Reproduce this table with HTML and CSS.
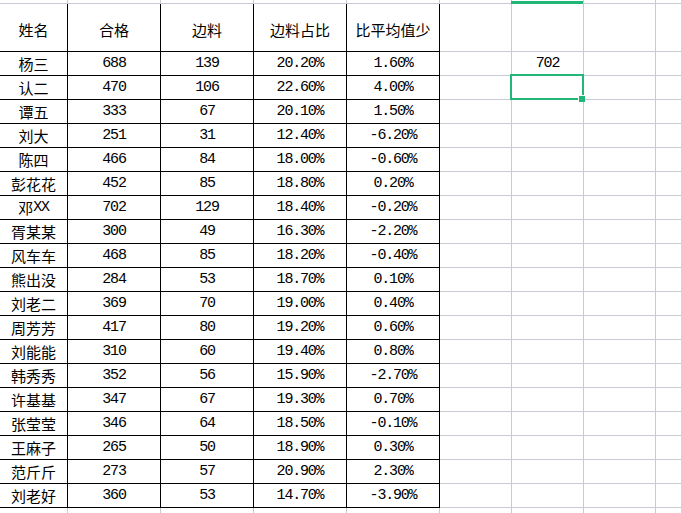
FILE: index.html
```html
<!DOCTYPE html>
<html lang="zh-CN">
<head>
<meta charset="utf-8">
<title>表格</title>
<link rel="stylesheet" href="styles.css">
</head>
<body>
<div class="sheet">
  <div class="r top"><div></div><div></div><div></div><div></div><div></div><div></div><div class="csel"></div><div></div><div></div></div>
  <div class="r t h"><div>姓名</div><div>合格</div><div>边料</div><div>边料占比</div><div>比平均值少</div><div></div><div></div><div></div><div></div></div>
  <div class="r t"><div>杨三</div><div>688</div><div>139</div><div>20.20%</div><div>1.60%</div><div></div><div>702</div><div></div><div></div></div>
  <div class="r t"><div>认二</div><div>470</div><div>106</div><div>22.60%</div><div>4.00%</div><div></div><div class="sel"></div><div></div><div></div></div>
  <div class="r t"><div>谭五</div><div>333</div><div>67</div><div>20.10%</div><div>1.50%</div><div></div><div></div><div></div><div></div></div>
  <div class="r t"><div>刘大</div><div>251</div><div>31</div><div>12.40%</div><div>-6.20%</div><div></div><div></div><div></div><div></div></div>
  <div class="r t"><div>陈四</div><div>466</div><div>84</div><div>18.00%</div><div>-0.60%</div><div></div><div></div><div></div><div></div></div>
  <div class="r t"><div>彭花花</div><div>452</div><div>85</div><div>18.80%</div><div>0.20%</div><div></div><div></div><div></div><div></div></div>
  <div class="r t"><div>邓<span class="lat">XX</span></div><div>702</div><div>129</div><div>18.40%</div><div>-0.20%</div><div></div><div></div><div></div><div></div></div>
  <div class="r t"><div>胥某某</div><div>300</div><div>49</div><div>16.30%</div><div>-2.20%</div><div></div><div></div><div></div><div></div></div>
  <div class="r t"><div>风车车</div><div>468</div><div>85</div><div>18.20%</div><div>-0.40%</div><div></div><div></div><div></div><div></div></div>
  <div class="r t"><div>熊出没</div><div>284</div><div>53</div><div>18.70%</div><div>0.10%</div><div></div><div></div><div></div><div></div></div>
  <div class="r t"><div>刘老二</div><div>369</div><div>70</div><div>19.00%</div><div>0.40%</div><div></div><div></div><div></div><div></div></div>
  <div class="r t"><div>周芳芳</div><div>417</div><div>80</div><div>19.20%</div><div>0.60%</div><div></div><div></div><div></div><div></div></div>
  <div class="r t"><div>刘能能</div><div>310</div><div>60</div><div>19.40%</div><div>0.80%</div><div></div><div></div><div></div><div></div></div>
  <div class="r t"><div>韩秀秀</div><div>352</div><div>56</div><div>15.90%</div><div>-2.70%</div><div></div><div></div><div></div><div></div></div>
  <div class="r t"><div>许基基</div><div>347</div><div>67</div><div>19.30%</div><div>0.70%</div><div></div><div></div><div></div><div></div></div>
  <div class="r t"><div>张莹莹</div><div>346</div><div>64</div><div>18.50%</div><div>-0.10%</div><div></div><div></div><div></div><div></div></div>
  <div class="r t"><div>王麻子</div><div>265</div><div>50</div><div>18.90%</div><div>0.30%</div><div></div><div></div><div></div><div></div></div>
  <div class="r t"><div>范斤斤</div><div>273</div><div>57</div><div>20.90%</div><div>2.30%</div><div></div><div></div><div></div><div></div></div>
  <div class="r t"><div>刘老好</div><div>360</div><div>53</div><div>14.70%</div><div>-3.90%</div><div></div><div></div><div></div><div></div></div>
  <div class="r"><div></div><div></div><div></div><div></div><div></div><div></div><div></div><div></div><div></div></div>
</div>
</body>
</html>
```

FILE: styles.css
```css
html, body {
  margin: 0;
  padding: 0;
  background: #ffffff;
  overflow: hidden;
}

.sheet {
  width: 681px;
  height: 513px;
  overflow: hidden;
  display: grid;
  grid-template-columns: 68px 93px 93px 93px 93px 72px 72px 72px minmax(0, 1fr);
  grid-template-rows: 4px 48px repeat(19, 24px) 6px;
  font-family: "Liberation Mono", "Noto Sans CJK SC", monospace;
  font-size: 15px;
  letter-spacing: -1.2px;
  color: #000000;
}

.r {
  display: contents;
}

.r > div {
  box-sizing: border-box;
  border-right: 1px solid #c8cad5;
  border-bottom: 1px solid #c8cad5;
  display: flex;
  align-items: center;
  justify-content: center;
  white-space: nowrap;
  line-height: 1;
  min-width: 0;
}

.r > div:last-child {
  border-right: none;
}

.r:last-child > div {
  border-bottom: none;
}

.t > div:nth-child(-n+5) {
  border-right-color: #000000;
  border-bottom-color: #000000;
}

.t > div:first-child,
.h > div {
  font-family: "Noto Sans CJK SC", sans-serif;
  letter-spacing: 0;
}

.h > div {
  padding-top: 3px;
}

.lat {
  font-family: "Liberation Mono", monospace;
  letter-spacing: -1.2px;
}

.csel {
  position: relative;
}

.csel::after {
  content: "";
  position: absolute;
  left: -1px;
  right: 0;
  bottom: -1px;
  height: 3px;
  background: #22b678;
}

.sel {
  position: relative;
}

.sel::before {
  content: "";
  position: absolute;
  left: -2px;
  top: -2px;
  right: -1px;
  bottom: -1px;
  border: 2px solid #22b678;
}

.sel::after {
  content: "";
  position: absolute;
  right: -2px;
  bottom: -3px;
  width: 6px;
  height: 6px;
  background: #22b678;
  box-shadow: -1px -1px 0 #ffffff;
}
```
